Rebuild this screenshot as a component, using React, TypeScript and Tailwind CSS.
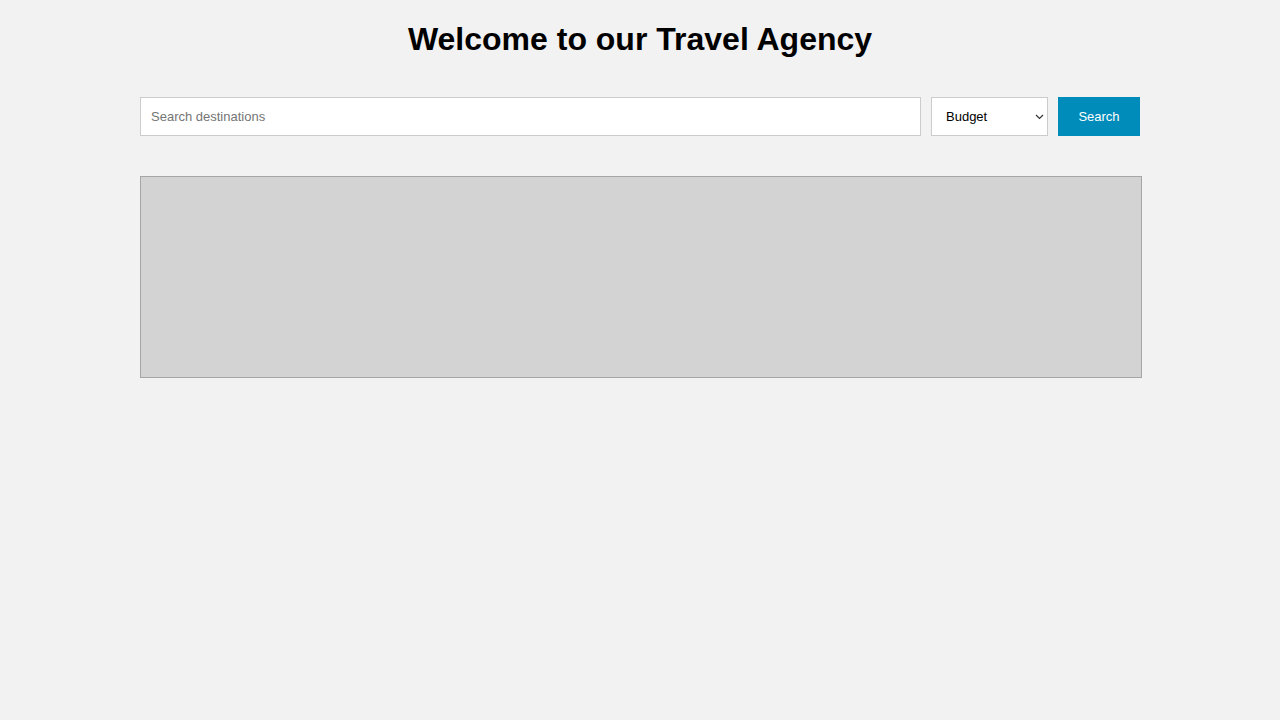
const App = () => {
  return (
    <div className="min-h-[720px] bg-[#f2f2f2] font-['Liberation_Sans',Arial,sans-serif] text-black">
      <h1 className="pt-[21px] text-center text-[32px] font-bold leading-[37px]">
        Welcome to our Travel Agency
      </h1>
      <div className="mx-auto w-[1000px]">
        <form
          className="mt-[39px] flex h-[39px] gap-[10px]"
          onSubmit={(e) => e.preventDefault()}
        >
          <input
            type="text"
            placeholder="Search destinations"
            className="h-full w-[781px] border border-[#ccc] bg-white px-[10px] text-[13px] outline-none placeholder:text-[#757575]"
          />
          <div className="relative h-full w-[117px]">
            <select
              defaultValue="budget"
              className="h-full w-full appearance-none border border-[#ccc] bg-white pl-[14px] pr-[20px] text-[13px] outline-none"
            >
              <option value="budget">Budget</option>
              <option value="mid">Mid-range</option>
              <option value="luxury">Luxury</option>
            </select>
            <svg
              className="pointer-events-none absolute right-[4px] top-[17px]"
              width="9"
              height="6"
              viewBox="0 0 9 6"
              fill="none"
            >
              <path d="M1 1l3.5 3.5L8 1" stroke="#333" strokeWidth="1.2" />
            </svg>
          </div>
          <button
            type="submit"
            className="h-full w-[82px] bg-[#008cba] text-[13px] text-white"
          >
            Search
          </button>
        </form>
        <div className="mt-[40px] h-[202px] w-[1002px] border border-[#a6a6a6] bg-[#d3d3d3]" />
      </div>
    </div>
  )
}

export default App
